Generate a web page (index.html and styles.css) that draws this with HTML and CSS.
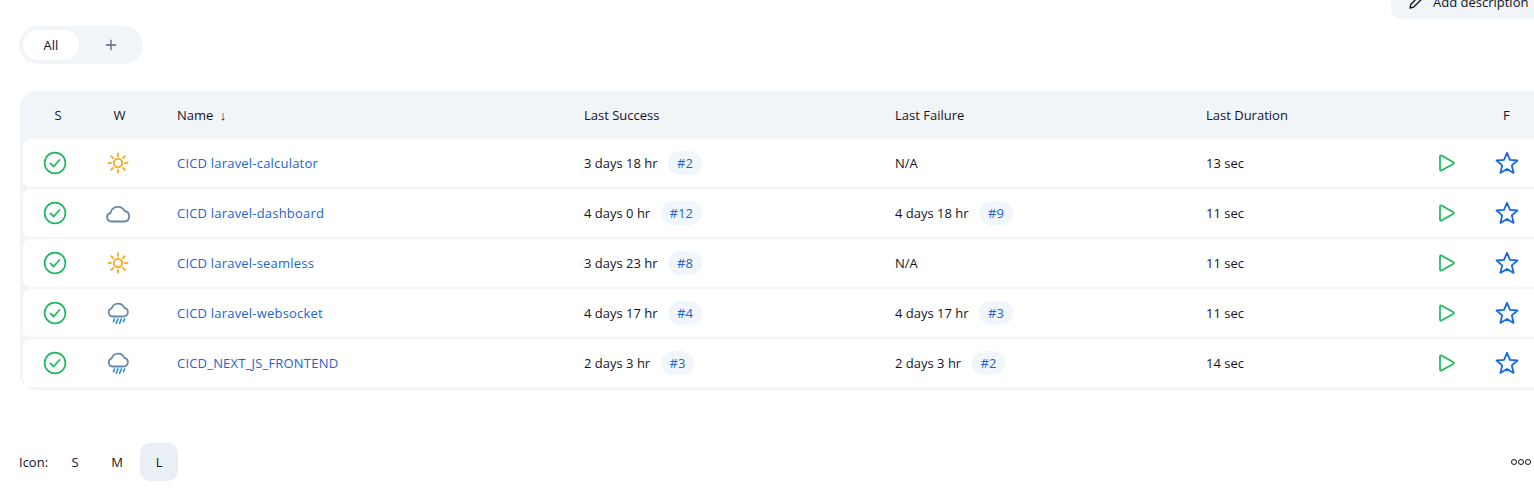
FILE: index.html
```html
<!DOCTYPE html>
<html lang="en">
<head>
  <meta charset="utf-8" />
  <title>Dashboard</title>
  <link rel="stylesheet" href="styles.css">
</head>
<body>
  <svg class="defs" width="0" height="0">
    <symbol id="ok" viewBox="0 0 24 24"><circle cx="12" cy="12" r="10.4" fill="none" stroke="#1fb862" stroke-width="1.7"/><path d="M7.5 12.4l3.1 3.1 5.9-6.500" fill="none" stroke="#1fb862" stroke-width="1.800" stroke-linecap="round" stroke-linejoin="round"/></symbol>
    <symbol id="sun" viewBox="0 0 24 24"><g fill="none" stroke="#f6b02c" stroke-width="2" stroke-linecap="round"><circle cx="12" cy="12" r="4.200"/><path d="M12 2.500v2.500M12 19v2.500M2.500 12h2.500M19 12h2.500M5.300 5.300l1.700 1.700M17 17l1.700 1.700M5.300 18.700L7 17M17 7l1.700-1.700"/></g></symbol>
    <symbol id="cloud" viewBox="0 0 24 24"><path d="M5.500 20.500a4.300 4.300 0 0 1-1-8.500A7.500 7.500 0 0 1 18.600 10a5.300 5.300 0 0 1 0 10.500z" fill="none" stroke="#6d86ab" stroke-width="1.800" stroke-linejoin="round"/></symbol>
    <symbol id="rain" viewBox="0 0 24 24"><path d="M6.500 15.500a4.200 4.200 0 0 1-.8-8.200 6.700 6.700 0 0 1 12.600-.5 4.400 4.400 0 0 1-.4 8.700z" fill="none" stroke="#6d86ab" stroke-width="1.800" stroke-linejoin="round"/><path d="M8.600 18l-1.200 2.600M12 18l-1.800 4.200M15.400 18l-1.800 4.200M18.600 18l-1.200 2.600" fill="none" stroke="#2f93d8" stroke-width="1.700" stroke-linecap="round"/></symbol>
    <symbol id="play" viewBox="0 0 24 24"><path d="M5 5.200v13.600a1 1 0 0 0 1.500.8l12-6.800a1 1 0 0 0 0-1.600l-12-6.800A1 1 0 0 0 5 5.200z" fill="none" stroke="#1fb862" stroke-width="1.700" stroke-linejoin="round"/></symbol>
    <symbol id="star" viewBox="0 0 24 24"><path d="M12 1.800l3 7.100 7.500.6-5.700 4.900 1.800 7.500L12 17.900l-6.600 4 1.800-7.500-5.700-4.900 7.500-.6z" fill="none" stroke="#1568e0" stroke-width="1.800" stroke-linejoin="round"/></symbol>
  </svg>

  <div class="top">
    <button class="add-desc">
      <svg class="pencil" viewBox="0 0 24 24"><path d="M4 20l1.200-5L16.500 3.700a2 2 0 0 1 2.800 0l1 1a2 2 0 0 1 0 2.800L9 18.800z" fill="none" stroke="#14141f" stroke-width="1.800" stroke-linejoin="round"/></svg>
      Add description
    </button>
  </div>

  <div class="tabs">
    <a class="tab active">All</a>
    <a class="tab"><svg class="plus" viewBox="0 0 12 12"><path d="M6 .8v10.400M.8 6h10.400" stroke="#5b6478" stroke-width="1.300" fill="none"/></svg></a>
  </div>

  <div class="table-wrap">
    <table class="jobs">
      <thead>
        <tr>
          <th class="c-s">S</th>
          <th class="c-w">W</th>
          <th>Name <span class="sort">↓</span></th>
          <th>Last Success</th>
          <th>Last Failure</th>
          <th>Last Duration</th>
          <th></th>
          <th class="c-f">F</th>
        </tr>
      </thead>
      <tbody>
        <tr>
          <td class="c-s"><svg class="ico"><use href="#ok"/></svg></td>
          <td class="c-w"><svg class="ico"><use href="#sun"/></svg></td>
          <td><a class="job">CICD laravel-calculator</a></td>
          <td>3 days 18 hr <a class="badge">#2</a></td>
          <td>N/A</td>
          <td>13 sec</td>
          <td class="c-play"><svg class="ico"><use href="#play"/></svg></td>
          <td class="c-f"><svg class="ico"><use href="#star"/></svg></td>
        </tr>
        <tr>
          <td class="c-s"><svg class="ico"><use href="#ok"/></svg></td>
          <td class="c-w"><svg class="ico"><use href="#cloud"/></svg></td>
          <td><a class="job">CICD laravel-dashboard</a></td>
          <td>4 days 0 hr <a class="badge">#12</a></td>
          <td>4 days 18 hr <a class="badge">#9</a></td>
          <td>11 sec</td>
          <td class="c-play"><svg class="ico"><use href="#play"/></svg></td>
          <td class="c-f"><svg class="ico"><use href="#star"/></svg></td>
        </tr>
        <tr>
          <td class="c-s"><svg class="ico"><use href="#ok"/></svg></td>
          <td class="c-w"><svg class="ico"><use href="#sun"/></svg></td>
          <td><a class="job">CICD laravel-seamless</a></td>
          <td>3 days 23 hr <a class="badge">#8</a></td>
          <td>N/A</td>
          <td>11 sec</td>
          <td class="c-play"><svg class="ico"><use href="#play"/></svg></td>
          <td class="c-f"><svg class="ico"><use href="#star"/></svg></td>
        </tr>
        <tr>
          <td class="c-s"><svg class="ico"><use href="#ok"/></svg></td>
          <td class="c-w"><svg class="ico"><use href="#rain"/></svg></td>
          <td><a class="job">CICD laravel-websocket</a></td>
          <td>4 days 17 hr <a class="badge">#4</a></td>
          <td>4 days 17 hr <a class="badge">#3</a></td>
          <td>11 sec</td>
          <td class="c-play"><svg class="ico"><use href="#play"/></svg></td>
          <td class="c-f"><svg class="ico"><use href="#star"/></svg></td>
        </tr>
        <tr>
          <td class="c-s"><svg class="ico"><use href="#ok"/></svg></td>
          <td class="c-w"><svg class="ico"><use href="#rain"/></svg></td>
          <td><a class="job">CICD_NEXT_JS_FRONTEND</a></td>
          <td>2 days 3 hr <a class="badge">#3</a></td>
          <td>2 days 3 hr <a class="badge">#2</a></td>
          <td>14 sec</td>
          <td class="c-play"><svg class="ico"><use href="#play"/></svg></td>
          <td class="c-f"><svg class="ico"><use href="#star"/></svg></td>
        </tr>
      </tbody>
    </table>
  </div>

  <div class="footer">
    <div class="sizes">
      <span class="sizes-label">Icon:</span>
      <a class="size">S</a>
      <a class="size">M</a>
      <a class="size current">L</a>
    </div>
    <div class="dots"><i></i><i></i><i></i></div>
  </div>
</body>
</html>
```

FILE: styles.css
```css
html, body {
    height: 100%;
    overflow: hidden;
}
body {
    margin: 0;
    width: 1534px;
    background: #fff;
    color: #14141f;
    font-family: "Open Sans", "Noto Sans", sans-serif;
    font-size: 13px;
    overflow: hidden;
}
.defs {
    display: block;
    height: 0;
}

/* top button, cut off by the window */
.top {
    height: 26px;
    display: flex;
    padding-left: 1391px;
}
.add-desc {
    flex: none;
    width: 170px;
    height: 40px;
    margin-top: -21px;
    padding: 5px 0 0 16px;
    border: 0;
    border-radius: 10px;
    background: #f2f5f8;
    color: #14141f;
    font: inherit;
    font-size: 13px;
    display: flex;
    align-items: center;
    gap: 8px;
}
.pencil {
    width: 18px;
    height: 18px;
}

/* tabs */
.tabs {
    width: 124px;
    height: 38px;
    margin-left: 19px;
    padding: 4px;
    box-sizing: border-box;
    display: flex;
    border-radius: 19px;
    background: #f2f5f8;
}
.tab {
    width: 56px;
    height: 30px;
    display: flex;
    align-items: center;
    justify-content: center;
    border-radius: 15px;
}
.tab.active {
    background: #fff;
}
.plus {
    width: 12px;
    height: 12px;
    margin-left: 8px;
}

/* job table */
.table-wrap {
    width: 1560px;
    margin: 27px 0 0 20px;
    padding: 3px;
    box-sizing: border-box;
    background: #f2f5f8;
    border-radius: 16px;
}
.jobs {
    width: 100%;
    table-layout: fixed;
    border-collapse: separate;
    border-spacing: 0;
}
.jobs th {
    height: 42px;
    padding: 0 0 3px;
    font-weight: 400;
    text-align: left;
}
.jobs td {
    height: 48px;
    padding: 0;
    background: #fff;
    border-bottom: 2px solid #f2f5f8;
}
.jobs tbody tr:last-child td {
    border-bottom: 0;
}
.jobs td:first-child {
    border-radius: 8px 0 0 8px;
}
.jobs th:nth-child(1) { width: 61px; }
.jobs th:nth-child(2) { width: 93px; }
.jobs th:nth-child(3) { width: 407px; }
.jobs th:nth-child(4) { width: 311px; }
.jobs th:nth-child(5) { width: 311px; }
.jobs th:nth-child(6) { width: 222px; }
.jobs th:nth-child(7) { width: 60px; }
.jobs th.c-s {
    padding-left: 9px;
    box-sizing: border-box;
    text-align: center;
}
.jobs th.c-w {
    padding-right: 22px;
    box-sizing: border-box;
    text-align: center;
}
.jobs th.c-f {
    padding-left: 15px;
}
.ico {
    display: block;
    width: 24px;
    height: 24px;
}
.c-s .ico { margin-left: 20px; }
.c-w .ico { margin-left: 22px; }
.c-play .ico { margin-left: 7px; }
.c-f .ico { margin-left: 7px; }
.job {
    color: #1b65cf;
    letter-spacing: .2px;
}
.sort {
    margin-left: 3px;
    font-size: 13px;
}
.badge {
    display: inline-block;
    margin-left: 7px;
    padding: 0 9px;
    height: 24px;
    line-height: 24px;
    border-radius: 12px;
    background: #f1f6fd;
    color: #1b65cf;
}

/* footer */
.footer {
    display: flex;
    justify-content: space-between;
    align-items: center;
    margin: 53px 0 0 19px;
    padding-right: 3px;
}
.sizes {
    display: flex;
    align-items: center;
}
.sizes-label {
    margin-right: 8px;
}
.size {
    width: 38px;
    height: 38px;
    margin-right: 4px;
    display: flex;
    align-items: center;
    justify-content: center;
    border-radius: 10px;
}
.size.current {
    background: #eaeef5;
}
.dots {
    display: flex;
    gap: 1px;
}
.dots i {
    width: 4px;
    height: 4px;
    border: 1px solid #14141f;
    border-radius: 50%;
}
```
